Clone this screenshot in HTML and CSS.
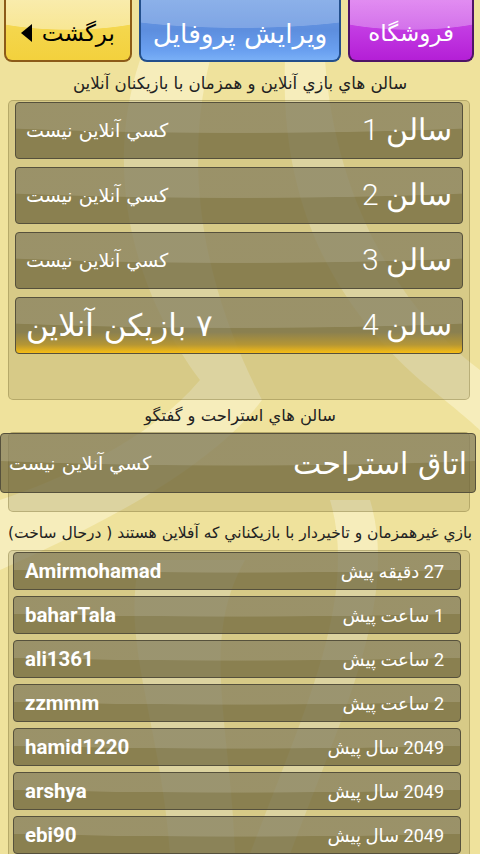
FILE: index.html
```html
<!DOCTYPE html>
<html lang="fa" dir="rtl">
<head>
<meta charset="utf-8">
<link rel="stylesheet" href="styles.css">
</head>
<body>
<div class="page">
  <header class="topbar">
    <div class="btn btn-shop">فروشگاه</div>
    <div class="btn btn-profile">ويرايش پروفايل</div>
    <div class="btn btn-back"><span>برگشت</span><span class="tri"></span></div>
  </header>

  <div class="title t1">سالن هاي بازي آنلاين و همزمان با بازيكنان آنلاين</div>
  <section class="panel p1">
    <div class="room"><span class="name">سالن 1</span><span class="info">كسي آنلاين نيست</span></div>
    <div class="room"><span class="name">سالن 2</span><span class="info">كسي آنلاين نيست</span></div>
    <div class="room"><span class="name">سالن 3</span><span class="info">كسي آنلاين نيست</span></div>
    <div class="room active"><span class="name">سالن 4</span><span class="info big">۷ بازيكن آنلاين</span></div>
  </section>

  <div class="title t2">سالن هاي استراحت و گفتگو</div>
  <section class="panel p2">
    <div class="room wide"><span class="name">اتاق استراحت</span><span class="info">كسي آنلاين نيست</span></div>
  </section>

  <div class="title t3">بازي غيرهمزمان و تاخيردار با بازيكناني كه آفلاين هستند ( درحال ساخت)</div>
  <section class="panel p3">
    <div class="user"><span class="time">27 دقيقه پيش</span><span class="uname">Amirmohamad</span></div>
    <div class="user"><span class="time">1 ساعت پيش</span><span class="uname">baharTala</span></div>
    <div class="user"><span class="time">2 ساعت پيش</span><span class="uname">ali1361</span></div>
    <div class="user"><span class="time">2 ساعت پيش</span><span class="uname">zzmmm</span></div>
    <div class="user"><span class="time">2049 سال پيش</span><span class="uname">hamid1220</span></div>
    <div class="user"><span class="time">2049 سال پيش</span><span class="uname">arshya</span></div>
    <div class="user"><span class="time">2049 سال پيش</span><span class="uname">ebi90</span></div>
  </section>
</div>
</body>
</html>
```

FILE: styles.css
```css
* { box-sizing: border-box; }
html, body { margin: 0; padding: 0; }
body {
  width: 480px;
  height: 854px;
  overflow: hidden;
  font-family: Roboto, "DejaVu Sans", sans-serif;
  background-color: #efe29c;
  background-image: url("data:image/svg+xml;utf8,<svg xmlns='http://www.w3.org/2000/svg' width='480' height='854'><g fill='%23f9f1c6' opacity='0.75'><path d='M140 60 C100 180 140 300 200 380 C150 440 60 480 0 500 L0 570 C90 530 210 470 262 400 C210 300 180 180 210 60 Z'/><path d='M285 60 C280 200 330 300 420 380 C470 420 480 430 480 430 L480 370 C400 310 335 200 325 60 Z'/><path d='M140 560 C120 640 160 720 170 854 L235 854 C230 720 200 640 245 560 Z'/><path d='M330 500 C360 600 300 720 250 854 L290 854 C340 720 400 600 370 500 Z'/></g></svg>");
  background-repeat: no-repeat;
}
.page { display: flex; flex-direction: column; }

.topbar {
  height: 62px;
  display: flex;
  gap: 7px;
  padding: 0 6px 0 4px;
}
.btn {
  height: 62px;
  border-style: solid;
  border-width: 0 2px 2px 2px;
  border-radius: 0 0 8px 8px;
  display: flex;
  align-items: center;
  justify-content: center;
  padding-top: 6px;
  font-size: 23px;
  font-family: "DejaVu Sans", sans-serif;
}
.btn-shop {
  width: 126px;
  color: #fff;
  border-color: #4e1465;
  background:
    radial-gradient(ellipse 95% 55% at 50% -5%, rgba(255,255,255,0.28) 98%, rgba(255,255,255,0) 100%),
    linear-gradient(to bottom, #d660ec 0%, #c23ae2 50%, #b41fd6 100%);
}
.btn-profile {
  width: 203px;
  color: #fff;
  font-size: 26.5px;
  border-color: #234f8c;
  background:
    radial-gradient(ellipse 90% 52% at 50% -5%, rgba(255,255,255,0.2) 98%, rgba(255,255,255,0) 100%),
    linear-gradient(to bottom, #6f9de3 0%, #5d8ede 50%, #6aa0f0 85%, #79aff6 100%);
}
.btn-back {
  width: 128px;
  color: #000;
  gap: 10px;
  border-color: #8c5b18;
  background:
    radial-gradient(ellipse 95% 55% at 50% -5%, rgba(255,255,255,0.4) 98%, rgba(255,255,255,0) 100%),
    linear-gradient(to bottom, #f5df74 0%, #f4d64c 50%, #f3d13d 100%);
}
.tri {
  width: 0; height: 0;
  border-top: 9px solid transparent;
  border-bottom: 9px solid transparent;
  border-right: 11px solid #000;
}

.title {
  font-family: "DejaVu Sans", sans-serif;
  font-size: 16.6px;
  color: #222;
  text-align: center;
  display: flex;
  align-items: center;
  justify-content: center;
  white-space: nowrap;
}
.t1 { height: 38px; padding-top: 4px; }
.t2 { height: 32px; padding-bottom: 2px; font-size: 16.3px; }
.t3 { height: 38px; font-size: 15.5px; padding-top: 3px; }

.panel {
  margin: 0 10px 0 8px;
  background: rgba(120, 108, 55, 0.2);
  border: 1px solid rgba(120, 105, 50, 0.35);
  border-radius: 5px;
  display: flex;
  flex-direction: column;
}
.p1 { height: 300px; padding: 1px 6px 0 6px; gap: 8px; }
.p2 { height: 80px; padding-top: 0; }
.p3 { height: 330px; padding: 1px 8px 0 4px; gap: 6px; }

.room, .user {
  background:
    radial-gradient(ellipse 110% 70% at 50% -15%, rgba(255,255,255,0.14) 98%, rgba(255,255,255,0) 100%),
    rgba(108, 100, 60, 0.72);
  border: 1px solid #56513c;
  border-radius: 4px;
  display: flex;
  align-items: center;
  justify-content: space-between;
  color: #fff;
}
.room { height: 57px; padding: 0 10px 2px 10px; }
.room .name { font-size: 30px; font-family: Roboto, "DejaVu Sans", sans-serif; font-weight: 300; }
.room .info { font-size: 19px; font-family: "DejaVu Sans", sans-serif; }
.room .info.big { font-size: 31px; }
.room.active {
  background:
    radial-gradient(ellipse 110% 70% at 50% -15%, rgba(255,255,255,0.14) 98%, rgba(255,255,255,0) 100%),
    linear-gradient(to bottom, rgba(0,0,0,0) 62%, rgba(200,160,40,0.7) 85%, #f7bd14 100%),
    rgba(108, 100, 60, 0.72);
}
.room.wide {
  height: 60px;
  margin: 0 -7px 0 -9px;
  padding: 0 8px 0 8px;
}
.room.wide .name { font-size: 30px; font-family: "DejaVu Sans", sans-serif; font-weight: normal; }

.user { height: 38px; padding: 0 16px 0 11px; }
.user .time { font-size: 18px; font-family: Roboto, "DejaVu Sans", sans-serif; }
.user .uname { font-size: 20.5px; font-weight: bold; font-family: Roboto, sans-serif; }
```
